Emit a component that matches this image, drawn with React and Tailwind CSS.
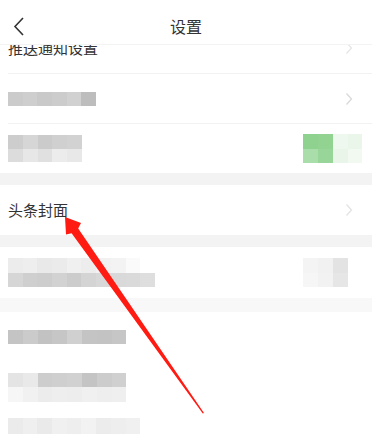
import React from 'react'

const font = { fontFamily: '"Noto Sans CJK SC", "Noto Sans", sans-serif' }

function Chevron({ color = '#d9d9d9' }) {
  return (
    <svg width="8" height="14" viewBox="0 0 8 14" className="mr-[19px] shrink-0">
      <polyline points="1.5,1.5 6.5,7 1.5,12.5" fill="none" stroke={color} strokeWidth="1.3" />
    </svg>
  )
}

// pixelated (mosaic) placeholder: rows of cells
function Mosaic({ rows, cell = 15, h = 14 }) {
  return (
    <div className="flex flex-col">
      {rows.map((r, i) => (
        <div key={i} className="flex">
          {r.map((c, j) => (
            <div key={j} style={{ width: cell, height: h, background: c }} />
          ))}
        </div>
      ))}
    </div>
  )
}

function Row({ children, right, className = '', line = true }) {
  return (
    <div className={`flex items-center justify-between pl-2 ${className}`}>
      <div className={`flex-1 h-full flex items-center justify-between ${line ? 'border-b border-[#f2f2f2]' : ''}`}>
        <div className="flex items-center">{children}</div>
        {right}
      </div>
    </div>
  )
}

export default function App() {
  return (
    <div className="relative w-[372px] h-[434px] overflow-hidden bg-white text-[#222]" style={font}>
      {/* header */}
      <div className="relative z-10 h-[45px] bg-white flex items-center justify-center border-b border-[#f3f3f3]">
        <svg width="12" height="20" viewBox="0 0 12 20" className="absolute left-[13px] top-[17px]">
          <polyline points="10,1 2,9.5 10,18" fill="none" stroke="#333" strokeWidth="1.6" />
        </svg>
        <span className="text-[16px] text-[#333] mt-[7px]">设置</span>
      </div>

      {/* list */}
      <div className="flex flex-col">
        <div className="h-[29px] overflow-hidden pl-2">
          <div className="h-[29px] border-b border-[#f2f2f2] overflow-hidden">
            <div className="-mt-[22px] h-[50px] flex items-center justify-between">
              <span className="text-[15px] text-[#333]">推送通知设置</span>
              <Chevron color="#e6e6e6" />
            </div>
          </div>
        </div>

        <Row className="h-[50px]" right={<Chevron />}>
          <Mosaic rows={[['#cbcbcb', '#cecece', '#c9c9c9', '#cccccc', '#d1d1d1', '#bdbdbd']]} cell={14.7} h={14} />
        </Row>

        <Row className="h-[49px]" line={false} right={
          <div className="flex mr-[10px]">
            <Mosaic rows={[['#8fd18f', '#92d392'], ['#a9dda9', '#98d598']]} cell={15} h={14.5} />
            <Mosaic rows={[['#eef8ee', '#eaf6ea'], ['#e8f5e8', '#f1f9f1']]} cell={14.5} h={14.5} />
          </div>
        }>
          <Mosaic
            rows={[
              ['#cdcdcd', '#d6d6d6', '#cbcbcb', '#d0d0d0', '#d2d2d2'],
              ['#dcdcdc', '#e7e7e7', '#e0e0e0', '#ececec', '#e8e8e8'],
            ]}
            cell={14.8}
            h={13.5}
          />
        </Row>

        <div className="h-[12px] bg-[#f3f3f3]" />

        <Row className="h-[50px]" line={false} right={<Chevron color="#e3e3e3" />}>
          <span className="text-[15px] text-[#333]">头条封面</span>
        </Row>

        <div className="h-[12px] bg-[#f3f3f3]" />

        <Row className="h-[51px]" line={false} right={
          <div className="mr-[24px]">
            <Mosaic rows={[['#f4f4f4', '#f1f1f1', '#e3e3e3'], ['#f6f6f6', '#f2f2f2', '#e6e6e6']]} cell={15} h={14.5} />
          </div>
        }>
          <Mosaic
            rows={[
              ['#ececec', '#eeeeee', '#e9e9e9', '#ebebeb', '#f0f0f0', '#ededed', '#f1f1f1', '#f3f3f3', '#fafafa', '#ffffff'],
              ['#d6d6d6', '#cfcfcf', '#cdcdcd', '#d2d2d2', '#cccccc', '#d4d4d4', '#d8d8d8', '#d9d9d9', '#dadada', '#dedede'],
            ]}
            cell={14.7}
            h={14.5}
          />
        </Row>

        <div className="h-[14px] bg-[#f8f8f8]" />

        <Row className="h-[50px]" line={false}>
          <Mosaic rows={[['#c4c4c4', '#cbcbcb', '#c2c2c2', '#c6c6c6', '#d0d0d0', '#c4c4c4', '#c3c3c3', '#c6c6c6']]} cell={14.8} h={14} />
        </Row>

        <Row className="h-[50px]" line={false}>
          <Mosaic
            rows={[
              ['#e4e4e4', '#e9e9e9', '#cdcdcd', '#cfcfcf', '#d1d1d1', '#c4c4c4', '#cccccc', '#d0d0d0'],
              ['#f6f6f6', '#f1f1f1', '#ececec', '#eeeeee', '#ededed', '#f0f0f0', '#eeeeee', '#efefef'],
            ]}
            cell={14.8}
            h={14.5}
          />
        </Row>

        <Row className="h-[28px]" line={false}>
          <Mosaic
            rows={[['#ebebeb', '#efefef', '#eaeaea', '#f0f0f0', '#eeeeee', '#f2f2f2', '#ececec', '#eeeeee', '#f0f0f0']]}
            cell={14.7}
            h={16}
          />
        </Row>
      </div>

      {/* red annotation arrow */}
      <svg className="absolute inset-0 z-20 pointer-events-none" width="372" height="434" viewBox="0 0 372 434">
        <polygon
          points="65,217 81,223 78.2,228.6 204,413 202.8,413.6 71.6,233.2 66,234.5"
          fill="#ff1b12"
        />
      </svg>
    </div>
  )
}
